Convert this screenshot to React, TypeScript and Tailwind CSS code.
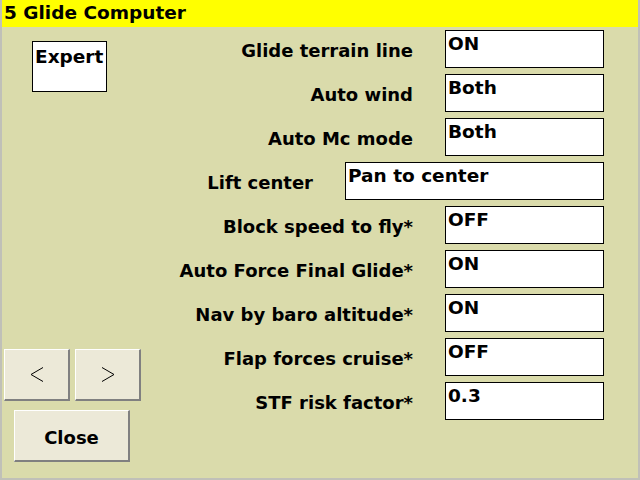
import React from "react";

type Row = {
    label: string;
    value: string;
    wide?: boolean;
};

const rows: Row[] = [
    { label: "Glide terrain line", value: "ON" },
    { label: "Auto wind", value: "Both" },
    { label: "Auto Mc mode", value: "Both" },
    { label: "Lift center", value: "Pan to center", wide: true },
    { label: "Block speed to fly*", value: "OFF" },
    { label: "Auto Force Final Glide*", value: "ON" },
    { label: "Nav by baro altitude*", value: "ON" },
    { label: "Flap forces cruise*", value: "OFF" },
    { label: "STF risk factor*", value: "0.3" },
];

const font = { fontFamily: '"DejaVu Sans", sans-serif' };

const Chevron = ({ dir }: { dir: "left" | "right" }) => (
    <svg width="14" height="15" viewBox="0 0 14 15" fill="none" stroke="black" strokeWidth="1">
        {dir === "left" ? <polyline points="13,0.5 1,7.5 13,14.5" /> : <polyline points="1,0.5 13,7.5 1,14.5" />}
    </svg>
);

const XButton = ({ className, children }: { className: string; children: React.ReactNode }) => (
    <div
        className={`flex items-center justify-center bg-[#ece9d8] border-t border-l border-white border-r-2 border-b-2 border-r-[#808080] border-b-[#808080] ${className}`}
    >
        {children}
    </div>
);

export default function App() {
    return (
        <div
            className="w-[640px] h-[480px] flex flex-col bg-[#dadbab] border-2 border-[#c0c0b8] border-t-0 overflow-hidden"
            style={font}
        >
            <div className="h-[27px] bg-[#ffff00] -mx-[2px] px-[4px] flex items-center text-[18.5px] font-bold leading-none text-black">
                5 Glide Computer
            </div>
            <div className="flex flex-1">
                <div className="w-[140px] flex flex-col">
                    <div className="mt-[14px] ml-[30px] w-[75px] h-[51px] bg-white border border-black px-[2px] pt-[6px] text-[18.5px] font-bold leading-none">
                        Expert
                    </div>
                    <div className="mt-auto flex gap-[5px] ml-[2px]">
                        <XButton className="w-[66px] h-[52px]">
                            <Chevron dir="left" />
                        </XButton>
                        <XButton className="w-[66px] h-[52px]">
                            <Chevron dir="right" />
                        </XButton>
                    </div>
                    <XButton className="mt-[9px] mb-[16px] ml-[12px] w-[116px] h-[52px] pt-[3px] text-[18px] font-bold">
                        Close
                    </XButton>
                </div>
                <div className="flex-1 flex flex-col gap-[6px] pt-[3px] pr-[34px]">
                    {rows.map((r) => (
                        <div key={r.label} className="flex items-center justify-end gap-[32px] h-[38px]">
                            <div className="text-[18px] font-bold leading-none mt-[4px]">{r.label}</div>
                            <div
                                className={`h-[38px] bg-white border border-black px-[2px] pt-[4px] text-[18.5px] font-bold leading-none ${r.wide ? "w-[259px]" : "w-[159px]"}`}
                            >
                                {r.value}
                            </div>
                        </div>
                    ))}
                </div>
            </div>
        </div>
    );
}
